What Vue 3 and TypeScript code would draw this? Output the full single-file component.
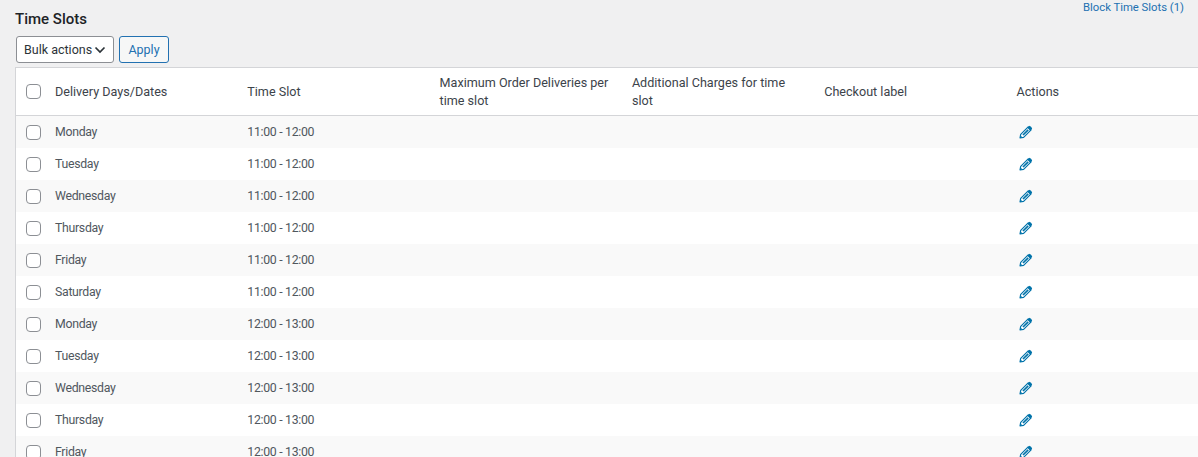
<script setup lang="ts">
const days = ['Monday', 'Tuesday', 'Wednesday', 'Thursday', 'Friday', 'Saturday']
const rows = [
  ...days.map((day) => ({ day, slot: '11:00 - 12:00' })),
  ...days.slice(0, 5).map((day) => ({ day, slot: '12:00 - 13:00' })),
]
</script>

<template>
  <div class="page">
    <div class="top">
      <h2 class="title">Time Slots</h2>
      <a class="block-link" href="#">Block Time Slots (1)</a>
    </div>
    <div class="bulk">
      <button class="select" type="button">
        <span>Bulk actions</span>
        <svg width="12" height="8" viewBox="0 0 12 8"><path d="M1.5 1.5 6 6l4.5-4.5" fill="none" stroke="#2c3338" stroke-width="1.7" /></svg>
      </button>
      <button class="apply" type="button">Apply</button>
    </div>
    <table class="grid">
      <colgroup>
        <col class="c-check" />
        <col class="c-data" /><col class="c-data" /><col class="c-data" />
        <col class="c-data" /><col class="c-data" /><col class="c-data" />
      </colgroup>
      <thead>
        <tr>
          <th class="check"><span class="box"></span></th>
          <th>Delivery Days/Dates</th>
          <th>Time Slot</th>
          <th>Maximum Order Deliveries per time slot</th>
          <th>Additional Charges for time slot</th>
          <th>Checkout label</th>
          <th>Actions</th>
        </tr>
      </thead>
      <tbody>
        <tr v-for="(row, i) in rows" :key="i">
          <td class="check"><span class="box"></span></td>
          <td>{{ row.day }}</td>
          <td>{{ row.slot }}</td>
          <td></td>
          <td></td>
          <td></td>
          <td class="act">
            <svg class="pen" width="14" height="14" viewBox="0 0 14 14">
              <path d="M1 13l.7-3.6L9.2 1.9l2.9 2.9-7.5 7.5z" fill="#fff" stroke="#0073aa" stroke-width="1.2" stroke-linejoin="round" />
              <path d="M8.3 2.8 9.9 1.2a1 1 0 0 1 1.4 0l1.5 1.5a1 1 0 0 1 0 1.4l-1.6 1.6z" fill="#0073aa" />
              <path d="M1 13l.5-2.6 2.1 2.1zM3.4 9.4l5.2-5.2 1.2 1.2-5.2 5.2z" fill="#0073aa" />
            </svg>
          </td>
        </tr>
      </tbody>
    </table>
  </div>
</template>

<style>
html, body { margin: 0; height: 457px; overflow: hidden; background: #f0f0f1; }
</style>

<style scoped>
.page {
  width: 1198px;
  height: 457px;
  overflow: hidden;
  box-sizing: border-box;
  padding-left: 15px;
  font-family: Roboto, "Open Sans", sans-serif;
  font-size: 13px;
  color: #50575e;
}
.top {
  display: flex;
  justify-content: space-between;
  align-items: flex-start;
  height: 36px;
  padding-right: 14px;
}
.title {
  margin: 9px 0 0;
  font-size: 15px;
  line-height: 20px;
  font-weight: 500;
  color: #1d2327;
}
.block-link {
  line-height: 16px;
  font-size: 11.3px;
  color: #2271b1;
  text-decoration: none;
}
.bulk {
  display: flex;
  gap: 5px;
  height: 31px;
  padding-left: 1px;
  align-items: flex-start;
}
.select, .apply {
  box-sizing: border-box;
  height: 27px;
  border-radius: 3px;
  background: #fff;
  font: inherit;
  font-size: 12.5px;
  padding: 0;
  display: flex;
  align-items: center;
  white-space: nowrap;
}
.select {
  width: 98px;
  border: 1px solid #8c8f94;
  color: #2c3338;
  padding: 0 7px;
  justify-content: space-between;
}
.apply {
  width: 50px;
  justify-content: center;
  border: 1px solid #2271b1;
  color: #2271b1;
  background: #f6f7f7;
}
.grid {
  width: 1185.8px;
  table-layout: fixed;
  border-collapse: separate;
  border-spacing: 0;
  background: #fff;
  border: 1px solid #d4d5d8;
  border-right: 0;
}
.c-check { width: 31px; }
.c-data { width: 192.3px; }
th {
  height: 48px;
  box-sizing: border-box;
  padding: 0 8px;
  text-align: left;
  font-weight: 400;
  font-size: 12.6px;
  line-height: 18px;
  color: #3c434a;
  border-bottom: 1px solid #d4d5d8;
  vertical-align: middle;
}
td {
  height: 32px;
  box-sizing: border-box;
  padding: 0 8px;
  vertical-align: middle;
  font-size: 12.3px;
  letter-spacing: -0.3px;
  line-height: 18px;
}
tbody tr:nth-child(odd) { background: #f9f9f9; }
th.check, td.check { padding: 0 0 0 10px; }
.box {
  display: block;
  width: 13px;
  height: 13px;
  border: 1px solid #8c8f94;
  border-radius: 4px;
  background: #fff;
}
td.act { padding: 0 8px 0 11px; }
.pen { display: block; }
</style>
